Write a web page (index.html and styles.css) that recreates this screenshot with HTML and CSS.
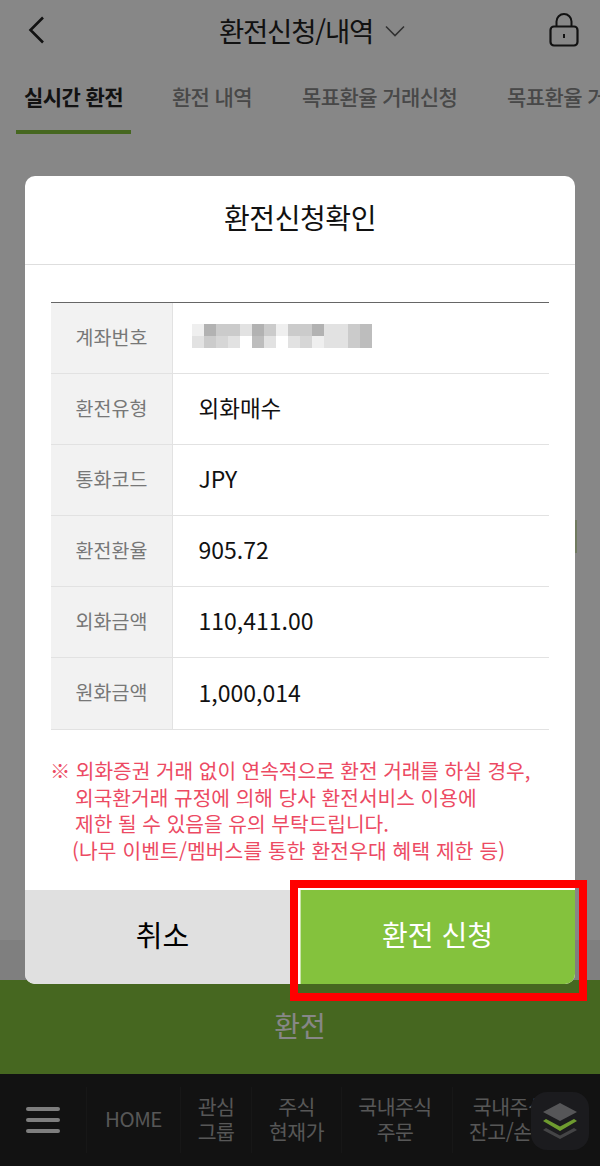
FILE: index.html
```html
<!DOCTYPE html>
<html lang="ko">
<head>
<meta charset="utf-8">
<title>환전신청/내역</title>
<link rel="stylesheet" href="styles.css">
</head>
<body>
<div class="page">
  <header class="top">
    <svg class="back" width="20" height="30" viewBox="0 0 20 30"><path d="M16 2.500 3.500 15 16 27.500" fill="none" stroke="#222" stroke-width="2.600"/></svg>
    <div class="title"><span>환전신청/내역</span>
      <svg width="22" height="12" viewBox="0 0 22 12"><path d="M2 1.500 11 10.500 20 1.500" fill="none" stroke="#5e5e5e" stroke-width="1.600"/></svg>
    </div>
    <svg class="lock" width="30" height="36" viewBox="0 0 30 36"><path d="M7.500 15V9.500a7.500 7.500 0 0 1 15 0V15" fill="none" stroke="#222" stroke-width="2"/><rect x="1.500" y="14.500" width="27" height="19" rx="3.500" fill="none" stroke="#222" stroke-width="2.200"/><rect x="14" y="22" width="2" height="4" fill="#222"/></svg>
  </header>
  <nav class="tabs">
    <span class="tab on">실시간 환전</span>
    <span class="tab">환전 내역</span>
    <span class="tab">목표환율 거래신청</span>
    <span class="tab">목표환율 거래내역</span>
  </nav>
  <main class="body"></main>
  <div class="band"></div>
  <div class="action">환전</div>
  <footer class="bottom">
    <div class="menu"><i></i><i></i><i></i></div>
    <div class="bn home">HOME</div>
    <div class="bn fav">관심<br>그룹</div>
    <div class="bn cur">주식<br>현재가</div>
    <div class="bn ord">국내주식<br>주문</div>
    <div class="bn bal">국내주식<br>잔고/손익</div>
  </footer>
</div>
<div class="scrim"></div>
<section class="modal">
  <h2 class="mhead">환전신청확인</h2>
  <div class="mbody">
    <div class="grid">
      <div class="row"><div class="lab">계좌번호</div><div class="val">
        <div class="mosaic">
          <i class="e"></i><i class="s"></i><i class="b"></i><i class="b"></i><i class="d"></i><i class="s"></i><i class="b"></i><i class="e"></i><i class="b"></i><i class="b"></i><i class="s"></i><i class="d"></i><i class="d"></i><i class="b"></i><i class="a"></i>
          <i class="d"></i><i class="b"></i><i class="c"></i><i class="d"></i><i class="w"></i><i class="a"></i><i class="d"></i><i class="w"></i><i class="d"></i><i class="c"></i><i class="e"></i><i class="d"></i><i class="d"></i><i class="b"></i><i class="a"></i>
        </div>
      </div></div>
      <div class="row"><div class="lab">환전유형</div><div class="val ko">외화매수</div></div>
      <div class="row"><div class="lab">통화코드</div><div class="val">JPY</div></div>
      <div class="row"><div class="lab">환전환율</div><div class="val">905.72</div></div>
      <div class="row"><div class="lab">외화금액</div><div class="val">110,411.00</div></div>
      <div class="row"><div class="lab">원화금액</div><div class="val">1,000,014</div></div>
    </div>
    <div class="notice">
      <p class="first">※ 외화증권 거래 없이 연속적으로 환전 거래를 하실 경우,</p>
      <p class="ind">외국환거래 규정에 의해 당사 환전서비스 이용에</p>
      <p class="ind">제한 될 수 있음을 유의 부탁드립니다.</p>
      <p class="ind2">(나무 이벤트/멤버스를 통한 환전우대 혜택 제한 등)</p>
    </div>
  </div>
  <div class="btns">
    <div class="btn cancel">취소</div>
    <div class="btn ok">환전 신청</div>
  </div>
  <div class="hilite"></div>
</section>
<div class="mark"></div>
<div class="fab">
  <svg width="36" height="38" viewBox="0 0 36 38"><path d="M4 26 18 33.500 32 26 35 28 18 37 1 28Z" fill="#444446"/><path d="M1 19 4 17 18 24.500 32 17 35 19 18 29Z" fill="#6e9b2f"/><path d="M18 1 35 10 18 19 1 10Z" fill="#565658"/></svg>
</div>
</body>
</html>
```
FILE: styles.css
```css
* { box-sizing: border-box; }
html, body { margin: 0; padding: 0; }
body {
  width: 600px;
  height: 1166px;
  overflow: hidden;
  position: relative;
  font-family: "Noto Sans CJK KR", "Noto Sans", sans-serif;
  color: #000;
}
.page { height: 1166px; display: flex; flex-direction: column; background: #fff; }
.top {
  height: 62px;
  flex: none;
  display: flex;
  align-items: center;
  justify-content: space-between;
  padding: 0 21px 4px 27px;
  border-top: 1px solid #fff;
}
.title { display: flex; align-items: center; gap: 11px; font-size: 27.500px; letter-spacing: -1.200px; color: #222; margin-left: 29px; }
.title svg { margin-top: 3px; }
.tabs { height: 73px; flex: none; display: flex; gap: 49px; padding: 19px 0 0 24px; font-size: 21px; letter-spacing: -0.6px; color: #888; overflow: hidden; white-space: nowrap; align-items: flex-start; }
.tab { flex: none; font-weight: 500; }
.tab:nth-child(3) { margin-left: 1px; }
.tab:nth-child(4) { margin-left: 1px; }
.tab.on { color: #222; font-weight: 700; position: relative; }
.tab.on::after { content: ""; position: absolute; left: -8px; right: -8px; top: 49px; height: 4px; background: #84c23d; }
.body { flex: 1; background: #fff; }
.band { height: 40px; flex: none; background: #f0f0f0; }
.action { height: 94px; flex: none; background: #84c23d; color: #fff; font-size: 28px; padding-bottom: 4px; display: flex; align-items: center; justify-content: center; }
.bottom { height: 92px; flex: none; background: #222; color: #a4a4a4; display: flex; align-items: center; font-size: 20.500px; line-height: 24.500px; text-align: center; letter-spacing: -0.5px; white-space: nowrap; overflow: hidden; }
.menu { width: 86px; flex: none; height: 60px; display: flex; flex-direction: column; gap: 7px; justify-content: center; padding: 0 26px; }
.menu i { display: block; height: 4px; border-radius: 2px; background: #eee; }
.bn { flex: none; height: 66px; display: flex; align-items: center; justify-content: center; padding-bottom: 3px; border-left: 1px solid #2c2c2c; }
.home { width: 94px; }
.fav { width: 71px; }
.cur { width: 90px; }
.ord { width: 111px; padding-right: 4px; }
.bal { width: 108px; padding-left: 6px; }
.scrim { position: absolute; inset: 0; background: rgba(0, 0, 0, 0.47); }
.modal { position: absolute; left: 25px; top: 176px; width: 550px; height: 808px; background: #fff; border-radius: 10px; display: flex; flex-direction: column; }
.mhead { margin: 0; height: 89px; flex: none; border-bottom: 1px solid #dedede; padding-bottom: 6px; display: flex; align-items: center; justify-content: center; font-size: 28px; font-weight: 400; letter-spacing: -0.4px; color: #111; }
.mbody { flex: 1; padding: 37px 26px 0; }
.grid { border-top: 1px solid #666; border-bottom: 1px solid #e2e2e2; }
.row { height: 71px; display: flex; border-bottom: 1px solid #e2e2e2; }
.row:last-child { border-bottom: 0; }
.lab { width: 122px; flex: none; background: #f2f2f2; border-right: 1px solid #e2e2e2; padding-bottom: 4px; display: flex; align-items: center; justify-content: center; font-size: 19.500px; color: #777; }
.val { flex: 1; display: flex; align-items: center; padding: 0 0 4px 25.500px; font-size: 23px; color: #111; }
.val.ko { font-size: 22.500px; }
.mosaic { display: grid; grid-template-columns: repeat(15, 12px); grid-auto-rows: 12px; align-self: flex-start; margin: 21px 0 0 -6.500px; }
.mosaic i { display: block; }
.mosaic .w { background: #fff; }
.mosaic .e { background: #efefef; }
.mosaic .d { background: #e2e2e2; }
.mosaic .c { background: #d6d6d6; }
.mosaic .b { background: #cbcbcb; }
.mosaic .a { background: #bdbdbd; }
.mosaic .s { background: #b2b2b2; }
.notice { margin-top: 27px; font-size: 20.300px; line-height: 26.500px; color: #ec4a63; white-space: nowrap; }
.notice p { margin: 0; }
.first { margin-left: -1px !important; letter-spacing: -0.05px; }
.ind { padding-left: 24px; }
.ind2 { padding-left: 21px; letter-spacing: 0.15px; }
.btns { height: 94px; flex: none; display: flex; }
.btn { display: flex; align-items: center; justify-content: center; padding-bottom: 6px; }
.cancel { width: 273px; flex: none; background: #e0e0e0; color: #000; font-size: 29px; padding-left: 2px; border-bottom-left-radius: 10px; }
.ok { flex: 1; margin-top: -2px; background: #84c23d; color: #fff; font-size: 28px; border-left: 2px solid #fff; border-top: 2px solid #fff; box-shadow: inset 1px 0 0 #c9e3a8; border-bottom-right-radius: 10px; }
.hilite { position: absolute; left: 265px; top: 704px; width: 297px; height: 121px; border: 8px solid #f00; pointer-events: none; }
.mark { position: absolute; left: 575px; top: 520px; width: 2px; height: 33px; background: #707a60; }
.fab { position: absolute; left: 531px; top: 1092px; width: 58px; height: 58px; background: #1b1b1e; border-radius: 16px; display: flex; align-items: center; justify-content: center; }
```
